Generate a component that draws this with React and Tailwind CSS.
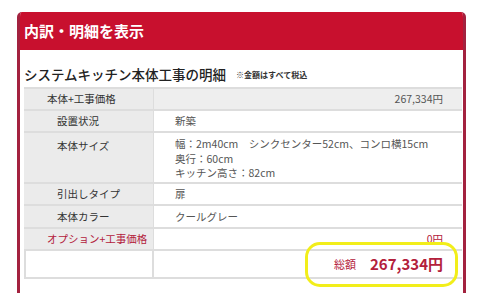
import React from 'react'

const rows = [
  { label: '本体+工事価格', value: '267,334円', head: true, h: 'h-[22px]' },
  { label: '設置状況', value: '新築', sub: true, h: 'h-[22px]' },
  {
    label: '本体サイズ',
    value: ['幅：2m40cm　シンクセンター52cm、コンロ横15cm', '奥行：60cm', 'キッチン高さ：82cm'],
    sub: true,
    h: 'h-[51px]',
  },
  { label: '引出しタイプ', value: '扉', sub: true, h: 'h-[22px]' },
  { label: '本体カラー', value: 'クールグレー', sub: true, h: 'h-[23px]' },
  { label: 'オプション+工事価格', value: '0円', option: true, h: 'h-[22px]' },
]

const Row = ({ row }) => {
  const multi = Array.isArray(row.value)
  return (
    <div className={`flex border-b-2 border-[#dddddd] ${row.h}`}>
      <div
        className={`w-[130px] shrink-0 bg-[#ebebeb] border-r border-[#dddddd] flex ${multi ? 'items-start pt-[5px]' : 'items-center'} ${row.sub ? 'pl-[33px]' : 'pl-[23px]'} ${row.option ? 'text-[#b3203b]' : 'text-[#333]'}`}
      >
        {row.label}
      </div>
      <div
        className={`flex-1 flex ${row.head ? 'bg-[#eeeeee]' : 'bg-white'} ${row.head || row.option ? 'justify-end items-center pr-[19px]' : 'pl-[21px]'} ${multi ? 'flex-col justify-start pt-[4px] leading-[14.5px]' : 'items-center'} ${row.option ? 'text-[#b3203b]' : 'text-[#555]'}`}
      >
        {multi ? row.value.map((v) => <div key={v}>{v}</div>) : row.value}
      </div>
    </div>
  )
}

const App = () => {
  return (
    <div
      className="w-[481px] h-[293px] overflow-hidden bg-white pt-[12px] pl-[17px]"
      style={{ fontFamily: '"Noto Sans CJK JP", "Noto Sans", sans-serif' }}
    >
      <div className="w-[449px] h-[300px] border-x-[3px] border-[#a3223f] rounded-t-[5px] overflow-hidden">
        <div className="h-[38px] bg-[#c8102e] flex items-center pl-[4px] text-white font-bold text-[15px]">
          内訳・明細を表示
        </div>
        <div className="pl-[4px] pr-[1px]">
          <div className="h-[37px] flex items-end pb-[3px]">
            <span className="text-[13.5px] text-[#222] font-medium">システムキッチン本体工事の明細</span>
            <span className="ml-[10px] mb-[3px] text-[8px] font-bold text-[#333]">※金額はすべて税込</span>
          </div>
          <div className="relative text-[10.5px]">
            <div className="border-t-2 border-[#dddddd]" />
            {rows.map((r) => (
              <Row key={r.label} row={r} />
            ))}
            <div className="flex h-[28px] border-b-2 border-[#dddddd]">
              <div className="w-[130px] shrink-0 bg-white border-l-2 border-r-2 border-[#dddddd]" />
              <div className="flex-1 flex items-center justify-end pr-[19px] text-[#b3203b] gap-[14px]">
                <span className="text-[11px]">総額</span>
                <span className="text-[15px] font-bold">267,334円</span>
              </div>
            </div>
            <div className="absolute left-[281px] top-[155px] w-[153px] h-[45px] rounded-[15px] border-[3px] border-[#f2ee1a]" />
          </div>
        </div>
      </div>
    </div>
  )
}

export default App
